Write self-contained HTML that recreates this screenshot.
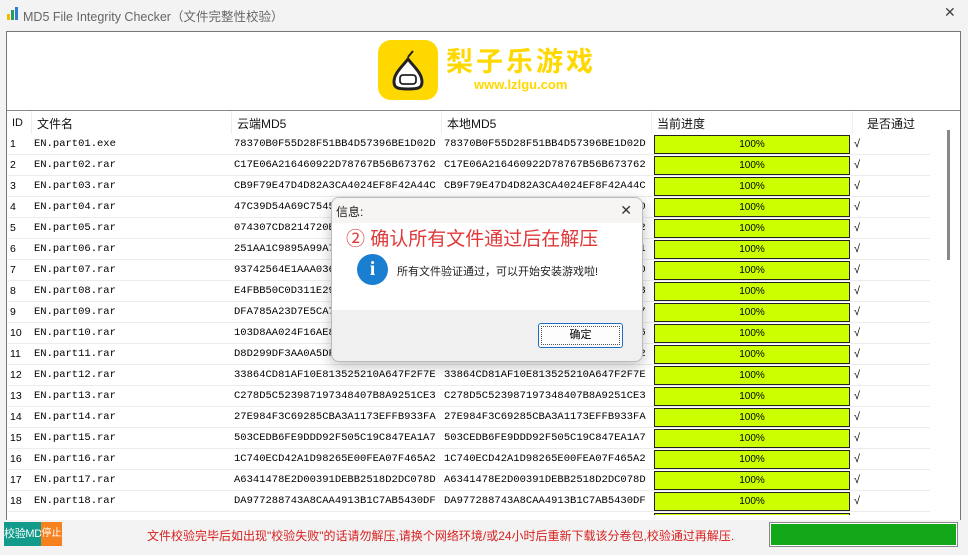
<!DOCTYPE html><html><head><meta charset="utf-8"><style>
*{margin:0;padding:0;box-sizing:border-box}
html,body{width:968px;height:555px;overflow:hidden}
body{background:#f3f3f3;font-family:"Liberation Sans","Noto Sans CJK SC",sans-serif;position:relative}
.abs{position:absolute;white-space:nowrap}
.mono{font-family:"Liberation Mono","Noto Sans CJK SC",monospace;font-size:10.5px}
.row{position:absolute;left:8px;width:922px;height:21px;border-bottom:1px solid #ececec;font-size:10.5px}
.row span{position:absolute;top:4px;white-space:nowrap}
.bar{position:absolute;left:646px;top:1px;width:196px;height:19px;background:#ccff00;border:1px solid #222;text-align:center;font-size:10px;line-height:17px}
</style></head><body>
<svg class="abs" style="left:7px;top:7px" width="12" height="13"><rect x="0" y="7" width="3" height="6" fill="#f5b800"/><rect x="4" y="3" width="3" height="10" fill="#2a9d5c"/><rect x="8" y="0" width="3" height="13" fill="#2a7fd0"/></svg>
<div class="abs" style="left:23px;top:6px;font-size:12.5px;color:#666">MD5 File Integrity Checker（文件完整性校验）</div>
<div class="abs" style="left:944px;top:4px;font-size:14px;color:#444">✕</div>
<div class="abs" style="left:6px;top:31px;width:955px;height:489px;background:#fff;border:1px solid #777"></div>
<div class="abs" style="left:7px;top:110px;width:953px;height:1px;background:#888"></div>
<div class="abs" style="left:378px;top:40px;width:60px;height:60px;background:#ffd800;border-radius:13px"></div>
<svg class="abs" style="left:378px;top:40px" width="60" height="60"><path d="M30 17 L35 11" stroke="#222" stroke-width="2"/><path d="M30 19 C24 27 16 33 16 42 C16 48 20 49 30 49 C40 49 44 48 44 42 C44 33 36 27 30 19Z" fill="#fff" stroke="#222" stroke-width="3"/><rect x="22" y="35" width="16" height="9" rx="3" fill="none" stroke="#222" stroke-width="1.8"/></svg>
<div class="abs" style="left:446px;top:40px;font-size:27px;font-weight:bold;color:#ffd800;letter-spacing:3px;font-family:'Noto Sans CJK SC',sans-serif">梨子乐游戏</div>
<div class="abs" style="left:474px;top:77px;font-size:13px;font-weight:bold;color:#ffd800">www.lzlgu.com</div>
<div class="abs" style="left:7px;top:111px;width:923px;height:23px;font-size:12px;color:#111">
<span class="abs" style="left:5px;top:6px;font-size:11px">ID</span>
<span class="abs" style="left:30px;top:4px">文件名</span>
<span class="abs" style="left:230px;top:4px">云端MD5</span>
<span class="abs" style="left:440px;top:4px">本地MD5</span>
<span class="abs" style="left:650px;top:4px">当前进度</span>
<span class="abs" style="left:860px;top:4px">是否通过</span>
<div class="abs" style="left:24px;top:0;width:1px;height:23px;background:#eee"></div>
<div class="abs" style="left:224px;top:0;width:1px;height:23px;background:#eee"></div>
<div class="abs" style="left:434px;top:0;width:1px;height:23px;background:#eee"></div>
<div class="abs" style="left:644px;top:0;width:1px;height:23px;background:#eee"></div>
<div class="abs" style="left:845px;top:0;width:1px;height:23px;background:#eee"></div>
</div>
<div id="rows"></div>
<div class="abs" style="left:947px;top:130px;width:3px;height:130px;background:#888"></div>
<script>
var c=["78370B0F55D28F51BB4D57396BE1D02D","C17E06A216460922D78767B56B673762","CB9F79E47D4D82A3CA4024EF8F42A44C","47C39D54A69C7545B1E2A77C9D3F5A10","074307CD8214720B6A1F33E0C7D5B982","251AA1C9895A99A7C3D41E2F70B6A5D1","93742564E1AAA036F2C8B7D415E9A320","E4FBB50C0D311E29A7F5C9B2D8064E13","DFA785A23D7E5CA7B2D9F1E06C4A8357","103D8AA024F16AE82C9B5D7E3F014A66","D8D299DF3AA0A5DF7E1C26B94D85F0A2","33864CD81AF10E813525210A647F2F7E","C278D5C523987197348407B8A9251CE3","27E984F3C69285CBA3A1173EFFB933FA","503CEDB6FE9DDD92F505C19C847EA1A7","1C740ECD42A1D98265E00FEA07F465A2","A6341478E2D00391DEBB2518D2DC078D","DA977288743A8CAA4913B1C7AB5430DF"];
var h="";for(var i=0;i<19;i++){var n=(i<9?"0":"")+(i+1);var ext=i==0?"exe":"rar";var y=134+i*21;
h+='<div class="row" style="top:'+y+'px;'+(i==18?'height:6px;border:0;overflow:hidden':'')+'">'+(i<18?'<span style="left:2px">'+(i+1)+'</span><span class="mono" style="left:26px">EN.part'+n+'.'+ext+'</span><span class="mono" style="left:226px">'+c[i]+'</span><span class="mono" style="left:436px">'+c[i]+'</span><div class="bar">100%</div><span style="left:846px;font-size:11px">√</span>':'<div class="bar"></div>')+'</div>';}
document.getElementById("rows").innerHTML=h;
</script>
<div class="abs" style="left:7px;top:515px;width:953px;height:5px;background:#fff"></div>
<div class="abs" style="left:4px;top:522px;width:37px;height:24px;background:#129b8a;color:#fff;font-size:11px;line-height:24px;text-align:center;overflow:hidden;letter-spacing:-0.3px">校验MD5</div>
<div class="abs" style="left:41px;top:522px;width:21px;height:24px;background:#f5821f;color:#fff;font-size:10px;line-height:24px;text-align:center;overflow:hidden">停止</div>
<div class="abs" style="left:147px;top:527px;font-size:12px;color:#d82020">文件校验完毕后如出现"校验失败"的话请勿解压,请换个网络环境/或24小时后重新下载该分卷包,校验通过再解压.</div>
<div class="abs" style="left:769px;top:522px;width:189px;height:25px;border:1px solid #888;background:#fff;padding:1px"><div style="width:100%;height:100%;background:#12a81a"></div></div>
<div class="abs" style="left:331px;top:197px;width:312px;height:165px;border:1px solid #bbb;border-radius:8px;background:#f0f0f0;overflow:hidden;box-shadow:0 4px 14px rgba(0,0,0,.25)">
<div style="height:25px;background:#f7f5f3;font-size:12px;padding:5px 4px;color:#222">信息:</div>
<div class="abs" style="right:10px;top:4px;font-size:14px;color:#333">✕</div>
<div style="height:87px;background:#fff;position:relative">
<div class="abs" style="left:14px;top:1px;font-size:19px;color:#e03838">② 确认所有文件通过后在解压</div>
<div class="abs" style="left:25px;top:31px;width:31px;height:31px;border-radius:50%;background:#1a7fd0;color:#fff;text-align:center;font:bold 20px/31px 'Liberation Serif',serif">i</div>
<div class="abs" style="left:65px;top:40px;font-size:11px;color:#222">所有文件验证通过，可以开始安装游戏啦!</div>
</div>
<div class="abs" style="left:206px;top:125px;width:85px;height:25px;border:1px solid #1a6fc0;border-radius:3px;background:#fdfdfd;font-size:11px;text-align:center;line-height:23px;outline:1px dotted #555;outline-offset:-4px">确定</div>
</div>
</body></html>
